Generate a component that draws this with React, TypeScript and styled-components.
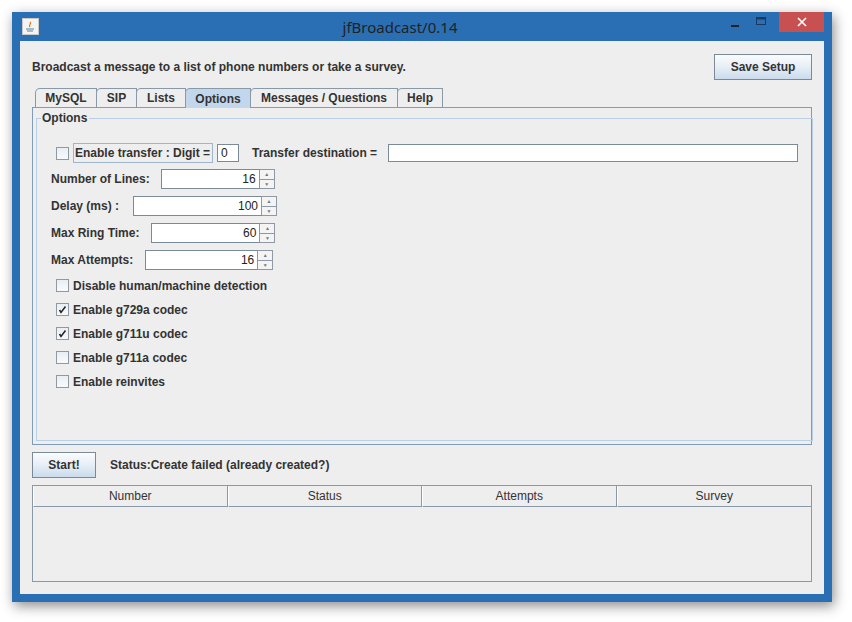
import styled, { createGlobalStyle } from "styled-components";

const Global = createGlobalStyle`
  html, body { margin: 0; padding: 0; background: #fff; }
  body { font-family: "Liberation Sans", Arial, sans-serif; font-size: 12px; color: #333; }
`;

const Page = styled.div`
  width: 852px;
  height: 622px;
  padding: 12px 0 0 12px;
  box-sizing: border-box;
`;

const Frame = styled.div`
  width: 820px;
  height: 590px;
  background: #2a6fb4;
  box-shadow: 2px 4px 12px rgba(0, 0, 0, 0.45);
  display: flex;
  flex-direction: column;
  padding: 0 8px 8px 8px;
  box-sizing: border-box;
`;

const TitleBar = styled.div`
  height: 30px;
  display: flex;
  align-items: center;
  color: #fff;
`;

const TitleText = styled.div`
  flex: 1;
  text-align: center;
  font-family: "Noto Sans", "Liberation Sans", sans-serif;
  font-size: 15px;
  color: #222;
  padding-left: 40px;
`;

const JavaIcon = styled.div`
  width: 15px;
  height: 15px;
  margin-left: 2px;
  background: #f4f4f4;
  border: 1px solid #c9c9c9;
  display: flex;
  align-items: center;
  justify-content: center;
`;

const Controls = styled.div`
  display: flex;
  align-items: flex-start;
  align-self: flex-start;
  height: 21px;
`;

const CtrlBtn = styled.div<{ $close?: boolean }>`
  width: ${(p) => (p.$close ? "45px" : "27px")};
  height: 20px;
  background: ${(p) => (p.$close ? "#c75050" : "transparent")};
  display: flex;
  align-items: center;
  justify-content: center;
  margin-left: ${(p) => (p.$close ? "4px" : "0")};
`;

const Client = styled.div`
  flex: 1;
  background: #eeeeee;
  padding: 13px 12px 12px 12px;
  display: flex;
  flex-direction: column;
  box-sizing: border-box;
`;

const TopRow = styled.div`
  display: flex;
  align-items: center;
  justify-content: space-between;
  height: 26px;
`;

const Bold = styled.span`
  font-weight: bold;
  white-space: nowrap;
`;

const Button = styled.div<{ $w: number }>`
  width: ${(p) => p.$w}px;
  height: 24px;
  border: 1px solid #7a8a99;
  background: linear-gradient(#fbfcfd, #e6eef6 50%, #cbdcec);
  display: flex;
  align-items: center;
  justify-content: center;
  font-weight: bold;
  box-sizing: content-box;
`;

const Tabs = styled.div`
  display: flex;
  margin: 8px 0 0 3px;
  height: 19px;
  align-items: flex-end;
`;

const Tab = styled.div<{ $active?: boolean; $w: number }>`
  width: ${(p) => p.$w}px;
  height: ${(p) => (p.$active ? "20px" : "19px")};
  box-sizing: border-box;
  border: 1px solid #8a99a8;
  border-bottom: none;
  border-top-left-radius: 5px;
  margin-right: -1px;
  background: ${(p) => (p.$active ? "#c3d7ec" : "#eeeeee")};
  display: flex;
  align-items: center;
  justify-content: center;
  font-weight: bold;
  position: relative;
  z-index: ${(p) => (p.$active ? 2 : 1)};
  margin-bottom: ${(p) => (p.$active ? "-1px" : "0")};
`;

const TabPanel = styled.div`
  height: 338px;
  border: 1px solid #7f9db9;
  padding: 3px;
  box-sizing: border-box;
`;

const Group = styled.fieldset`
  margin: 0;
  height: 100%;
  box-sizing: border-box;
  border: 1px solid #b8cfe5;
  padding: 12px 14px 0 14px;
  display: flex;
  flex-direction: column;
  legend {
    padding: 0 2px 0 1px;
    margin-left: -10px;
    font-size: 12px;
    color: #333;
    font-weight: bold;
  }
`;

const Row = styled.div<{ $h?: number }>`
  display: flex;
  align-items: center;
  height: ${(p) => p.$h ?? 24}px;
  margin-bottom: 3px;
`;

const Box = styled.div`
  width: 11px;
  height: 11px;
  border: 1px solid #8e99a4;
  background: linear-gradient(#e9eef3, #f8fbfd);
  margin: 0 4px 0 5px;
  display: flex;
  align-items: center;
  justify-content: center;
`;

const Focused = styled.span`
  border: 1px solid #9fb5cb;
  padding: 2px 2px 2px 1px;
  font-weight: bold;
  white-space: nowrap;
`;

const Field = styled.div<{ $w: number; $right?: boolean; $ml?: number }>`
  width: ${(p) => p.$w}px;
  height: 18px;
  box-sizing: border-box;
  border: 1px solid #7a8a99;
  background: #fff;
  margin-left: ${(p) => p.$ml ?? 0}px;
  display: flex;
  align-items: center;
  justify-content: ${(p) => (p.$right ? "flex-end" : "flex-start")};
  padding: 0 3px;
  font-size: 12px;
  color: #222;
`;

const SpinWrap = styled.div<{ $ml: number }>`
  display: flex;
  margin-left: ${(p) => p.$ml}px;
`;

const SpinBtns = styled.div`
  width: 15px;
  height: 20px;
  display: flex;
  flex-direction: column;
  border: 1px solid #8e99a4;
  border-left: none;
  box-sizing: border-box;
  div {
    flex: 1;
    background: #f4f4f4;
    font-size: 5px;
    color: #777;
    display: flex;
    align-items: center;
    justify-content: center;
  }
  div + div { border-top: 1px solid #8e99a4; }
`;

const SpinField = styled(Field)`
  height: 20px;
  border-right: 1px solid #8e99a4;
`;

const BottomRow = styled.div`
  display: flex;
  align-items: center;
  margin-top: 7px;
  gap: 14px;
`;

const Table = styled.div`
  margin-top: 7px;
  height: 96px;
  border: 1px solid #8a99a8;
  border-top: none;
  display: flex;
  flex-direction: column;
`;

const Header = styled.div`
  display: grid;
  grid-template-columns: repeat(4, 1fr);
  height: 21px;
  border-top: 1px solid #8a99a8;
`;

const HeadCell = styled.div`
  border-right: 1px solid #8a99a8;
  border-bottom: 1px solid #8a99a8;
  border-left: 1px solid #fff;
  display: flex;
  align-items: center;
  justify-content: center;
  font-weight: normal;
  color: #333;
  &:last-child { border-right: none; }
`;

const Check = () => (
  <svg width="9" height="9" viewBox="0 0 9 9">
    <path d="M1.5 5 L3 7.5 L7.5 1.5" stroke="#222" strokeWidth="1.5" fill="none" />
  </svg>
);

const spinners = [
  { label: "Number of Lines:", value: "16", ml: 11, w: 99 },
  { label: "Delay (ms) :", value: "100", ml: 14, w: 129 },
  { label: "Max Ring Time:", value: "60", ml: 12, w: 109 },
  { label: "Max Attempts:", value: "16", ml: 12, w: 113 },
];

const checks = [
  { label: "Disable human/machine detection", on: false },
  { label: "Enable g729a codec", on: true },
  { label: "Enable g711u codec", on: true },
  { label: "Enable g711a codec", on: false },
  { label: "Enable reinvites", on: false },
];

const tabs = [
  { name: "MySQL", w: 62 },
  { name: "SIP", w: 41 },
  { name: "Lists", w: 50 },
  { name: "Options", w: 66, active: true },
  { name: "Messages / Questions", w: 148 },
  { name: "Help", w: 46 },
];

export default function App() {
  return (
    <Page>
      <Global />
      <Frame>
        <TitleBar>
          <JavaIcon>
            <svg width="11" height="12" viewBox="0 0 11 12">
              <path d="M5 1 C7 3 3 4 5 6" stroke="#e76f00" fill="none" strokeWidth="1.2" />
              <path d="M1 8 H9 M2 10 H8" stroke="#5382a1" strokeWidth="1.2" />
            </svg>
          </JavaIcon>
          <TitleText>jfBroadcast/0.14</TitleText>
          <Controls>
            <CtrlBtn>
              <svg width="10" height="10"><rect x="1" y="8" width="8" height="2" fill="#222" /></svg>
            </CtrlBtn>
            <CtrlBtn>
              <svg width="11" height="10"><rect x="0.5" y="0.5" width="9" height="7" fill="none" stroke="#1b3a5e" strokeWidth="1" /><rect x="0.5" y="0.5" width="9" height="2" fill="#1b3a5e" /></svg>
            </CtrlBtn>
            <CtrlBtn $close>
              <svg width="10" height="10"><path d="M1 1 L9 9 M9 1 L1 9" stroke="#fff" strokeWidth="1.6" /></svg>
            </CtrlBtn>
          </Controls>
        </TitleBar>
        <Client>
          <TopRow>
            <Bold>Broadcast a message to a list of phone numbers or take a survey.</Bold>
            <Button $w={96}>Save Setup</Button>
          </TopRow>
          <Tabs>
            {tabs.map((t) => (
              <Tab key={t.name} $w={t.w} $active={t.active}>{t.name}</Tab>
            ))}
          </Tabs>
          <TabPanel>
            <Group>
              <legend>Options</legend>
              <Row $h={22} style={{ marginTop: 5, marginBottom: 3 }}>
                <Box />
                <Focused>Enable transfer : Digit =</Focused>
                <Field $w={22} $ml={4}>0</Field>
                <Bold style={{ marginLeft: 13 }}>Transfer destination =</Bold>
                <Field $w={410} $ml={11} />
              </Row>
              {spinners.map((s) => (
                <Row key={s.label} $h={24}>
                  <Bold>{s.label}</Bold>
                  <SpinWrap $ml={s.ml}>
                    <SpinField $w={s.w} $right>{s.value}</SpinField>
                    <SpinBtns><div>▲</div><div>▼</div></SpinBtns>
                  </SpinWrap>
                </Row>
              ))}
              {checks.map((c) => (
                <Row key={c.label} $h={21}>
                  <Box>{c.on && <Check />}</Box>
                  <Bold>{c.label}</Bold>
                </Row>
              ))}
            </Group>
          </TabPanel>
          <BottomRow>
            <Button $w={62}>Start!</Button>
            <Bold>Status:Create failed (already created?)</Bold>
          </BottomRow>
          <Table>
            <Header>
              {["Number", "Status", "Attempts", "Survey"].map((h) => (
                <HeadCell key={h}>{h}</HeadCell>
              ))}
            </Header>
          </Table>
        </Client>
      </Frame>
    </Page>
  );
}
